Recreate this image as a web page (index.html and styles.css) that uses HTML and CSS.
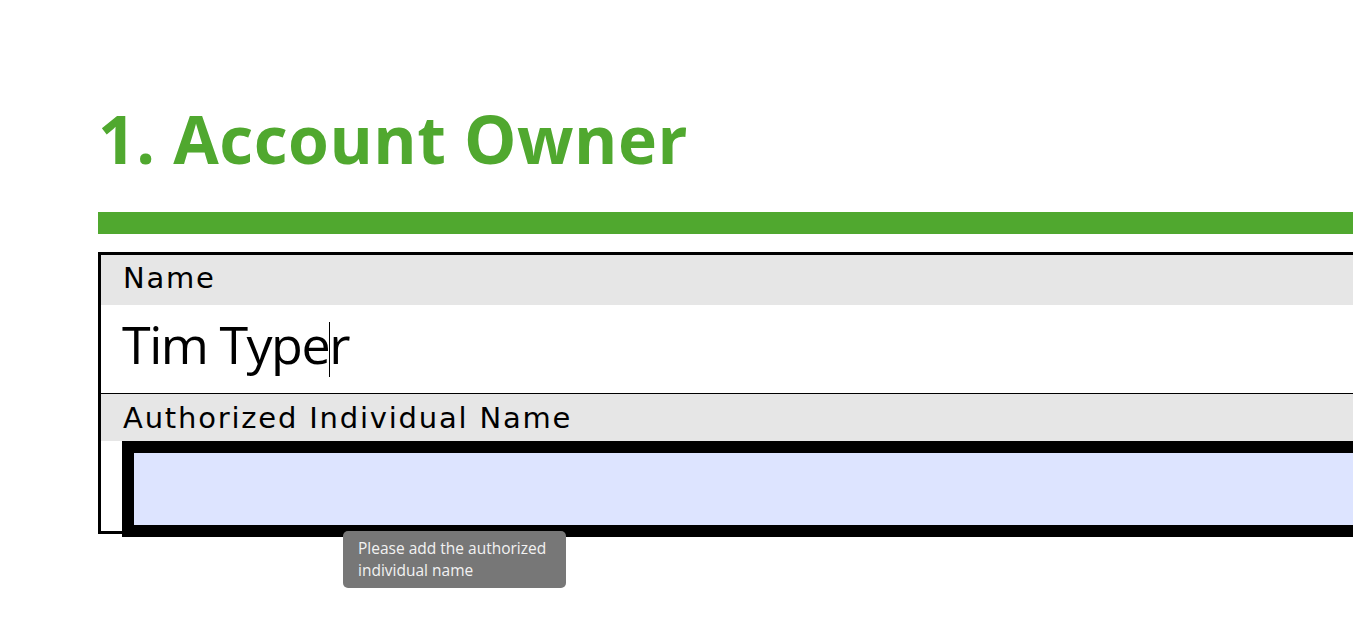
FILE: index.html
```html
<!DOCTYPE html>
<html lang="en">
<head>
<meta charset="utf-8">
<title>Account Owner</title>
<link rel="stylesheet" href="styles.css">
</head>
<body>
<main class="page">
  <h1 class="title">1. Account Owner</h1>
  <div class="rule"></div>
  <section class="form-box">
    <div class="field">
      <div class="label">Name</div>
      <div class="value"><span>Tim Type</span><span class="caret"></span><span>r</span></div>
    </div>
    <div class="field field-last">
      <div class="label label-2">Authorized Individual Name</div>
      <div class="input-area">
        <div class="input"></div>
        <div class="tooltip">Please add the authorized individual name</div>
      </div>
    </div>
  </section>
</main>
</body>
</html>
```

FILE: styles.css
```css
html {
  height: 100%;
  overflow: hidden;
  background: #ffffff;
}

body {
  margin: 0;
  padding: 0;
  height: 100%;
}

.page {
  box-sizing: border-box;
  width: 1600px;
  min-height: 624px;
  padding: 105px 0 0 98px;
}

.title {
  margin: 0;
  height: 66px;
  font-family: "Open Sans", "DejaVu Sans", sans-serif;
  font-weight: 700;
  font-size: 66px;
  line-height: 66px;
  letter-spacing: 0.5px;
  color: #50a82f;
}

.rule {
  margin-top: 41px;
  height: 22px;
  background: #50a82f;
}

.form-box {
  margin-top: 18px;
  border: 3px solid #000;
  border-right: none;
}

.label {
  box-sizing: border-box;
  height: 50px;
  padding: 6px 0 0 22px;
  background: #e6e6e6;
  font-family: "DejaVu Sans", sans-serif;
  font-size: 29px;
  line-height: 34px;
  letter-spacing: 1.8px;
  color: #000;
}

.label-2 {
  height: 47px;
  padding-top: 7px;
}

.value {
  box-sizing: border-box;
  height: 89px;
  padding: 3px 0 0 21px;
  border-bottom: 1px solid #000;
  font-family: "Open Sans", sans-serif;
  font-size: 52px;
  line-height: 71px;
  letter-spacing: -1.5px;
  color: #000;
}

.caret {
  display: inline-block;
  width: 1px;
  height: 55px;
  margin-right: -1px;
  background: #000;
  vertical-align: -13px;
}

.input-area {
  position: relative;
  height: 90px;
  padding-left: 21px;
}

.input {
  box-sizing: border-box;
  height: 96px;
  border: 12px solid #000;
  border-right: none;
  background: #dde4ff;
}

.tooltip {
  position: absolute;
  z-index: 2;
  left: 242px;
  top: 90px;
  box-sizing: border-box;
  width: 223px;
  padding: 6px 15px 7px;
  border-radius: 5px;
  background: #777777;
  color: #f2f2f2;
  font-family: "Open Sans", sans-serif;
  font-size: 15.5px;
  line-height: 22px;
}
```
